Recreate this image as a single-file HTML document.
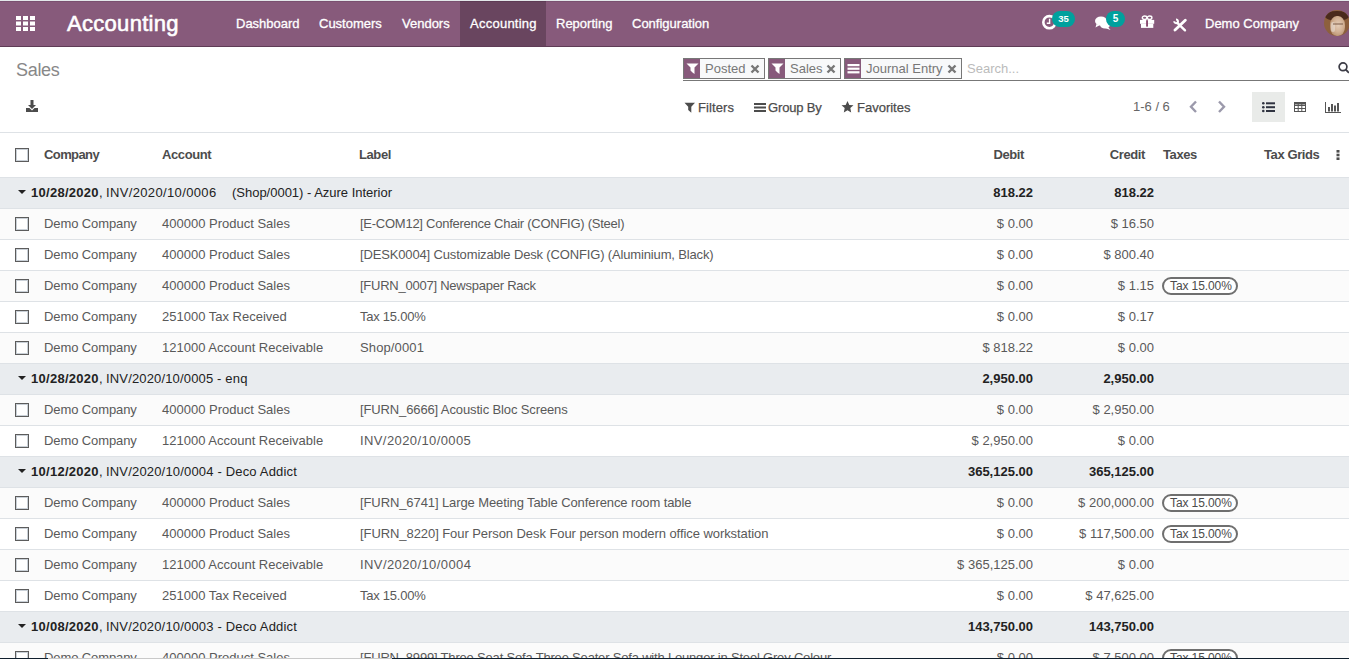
<!DOCTYPE html>
<html><head><meta charset="utf-8">
<style>
*{box-sizing:border-box;margin:0;padding:0}
html,body{width:1349px;height:659px;overflow:hidden;background:#fff;font-family:"Liberation Sans",sans-serif;color:#4c4c4c;position:relative}
.abs{position:absolute}
svg{display:block}
#topline{position:absolute;left:0;top:0;width:1349px;height:1px;background:#e3e8ea}
#nav{position:absolute;left:0;top:1px;width:1349px;height:46px;background:#875a7b;border-top:1px solid #7a5070;border-bottom:1px solid #5f3c56;color:#fff}
#nav .t{position:absolute;white-space:nowrap;font-size:13px;top:14px;-webkit-text-stroke:0.3px #fff}
#nav .active{position:absolute;left:460px;top:-1px;width:86px;height:45px;background:#69455f;border-top:1px solid #5e3b55}
.brand{position:absolute;left:67px;top:9px;font-size:22px;white-space:nowrap;letter-spacing:0.3px;-webkit-text-stroke:0.6px #fff}
.badge{position:absolute;background:#00a09d;color:#fff;border-radius:8px;font-size:9.5px;font-weight:bold;text-align:center;line-height:16px;height:16px}
#title{position:absolute;left:16px;top:60px;font-size:18px;color:#888;white-space:nowrap;letter-spacing:-0.3px}
.facet{position:absolute;top:58px;height:21px;border:1px solid #777;background:#f8f9fa;white-space:nowrap}
.facet .ic{position:absolute;left:0;top:0;width:16px;height:19px;background:#875a7b}
.facet .lb{position:absolute;left:21px;top:2px;font-size:13px;color:#777}
.tb{position:absolute;white-space:nowrap;font-size:13px;color:#4c4c4c}
.th{position:absolute;top:147px;font-size:13px;font-weight:bold;color:#4c4c4c;white-space:nowrap;letter-spacing:-0.4px}
.row{position:absolute;left:0;width:1349px;height:31px;border-top:1px solid #dee2e6}
.row.g{background:#e9ecef}
.row.o{background:#fbfbfb}
.row .c{position:absolute;top:7px;font-size:13px;white-space:nowrap;color:#595959}
.row .r{text-align:right}
.row.g .c{color:#222}
.cb{position:absolute;left:15px;width:14px;height:14px;border:1px solid #5c5c5c;background:#fff;box-shadow:inset 0 0 0 1px #c9d0d7}
.pill{position:absolute;left:1162px;top:6px;width:76px;height:18px;border:2px solid #6f6f6f;background:#fff;border-radius:9px;font-size:12px;white-space:nowrap;padding-left:6px;padding-top:0;line-height:15px;color:#4c4c4c;letter-spacing:-0.1px}
</style></head>
<body>
<div id="topline"></div>
<div id="nav">
  <svg class="abs" style="left:16px;top:14px" width="19" height="15" viewBox="0 0 19 15"><g fill="#fff">
    <rect x="0" y="0" width="5" height="4"/><rect x="7" y="0" width="5" height="4"/><rect x="14" y="0" width="5" height="4"/>
    <rect x="0" y="5.5" width="5" height="4"/><rect x="7" y="5.5" width="5" height="4"/><rect x="14" y="5.5" width="5" height="4"/>
    <rect x="0" y="11" width="5" height="4"/><rect x="7" y="11" width="5" height="4"/><rect x="14" y="11" width="5" height="4"/>
  </g></svg>
  <div class="brand">Accounting</div>
  <div class="active"></div>
  <div class="t" style="left:236px">Dashboard</div>
  <div class="t" style="left:319px">Customers</div>
  <div class="t" style="left:402px">Vendors</div>
  <div class="t" style="left:470px;letter-spacing:0.25px">Accounting</div>
  <div class="t" style="left:556px">Reporting</div>
  <div class="t" style="left:632px">Configuration</div>
  <div class="t" style="left:1205px">Demo Company</div>
  <!-- clock -->
  <svg class="abs" style="left:1040px;top:12px" width="18" height="18" viewBox="0 0 18 18">
    <circle cx="9.4" cy="8.2" r="6.1" fill="none" stroke="#fff" stroke-width="2.6"/>
    <path d="M9.6 4.8V9.2H6.8" fill="none" stroke="#fff" stroke-width="1.4"/>
  </svg>
  <div class="badge" style="left:1052px;top:9px;width:23px">35</div>
  <!-- comments -->
  <svg class="abs" style="left:1094px;top:12px" width="18" height="17" viewBox="0 0 18 17">
    <ellipse cx="7" cy="7" rx="6" ry="4.5" fill="#fff"/>
    <path d="M2.5 10 L1.5 13.5 L6 11Z" fill="#fff"/>
    <ellipse cx="11" cy="11" rx="5" ry="3.5" fill="#fff"/>
    <path d="M14 13 L16.5 16 L11 14Z" fill="#fff"/>
  </svg>
  <div class="badge" style="left:1106px;top:9px;width:19px;border-radius:8px;font-size:10px">5</div>
  <!-- gift -->
  <svg class="abs" style="left:1140px;top:13px" width="15" height="14" viewBox="0 0 15 14">
    <ellipse cx="4.6" cy="2.7" rx="2.3" ry="1.7" fill="none" stroke="#fff" stroke-width="1.4"/>
    <ellipse cx="9.6" cy="2.7" rx="2.3" ry="1.7" fill="none" stroke="#fff" stroke-width="1.4"/>
    <rect x="0" y="4.9" width="14.2" height="3.9" fill="#fff"/>
    <rect x="1" y="8.7" width="12.3" height="4.2" fill="#fff"/>
    <rect x="6.1" y="5.2" width="1.9" height="6.4" fill="#8a4a70"/>
  </svg>
  <!-- tools -->
  <svg class="abs" style="left:1173px;top:16px" width="14" height="14" viewBox="0 0 14 14">
    <path d="M4.3 4.8 L12 12.3" stroke="#fff" stroke-width="2.4" stroke-linecap="round"/>
    <path d="M1.2 3.3 A1.9 1.9 0 1 0 3 1.4" fill="none" stroke="#fff" stroke-width="2"/>
    <path d="M2 12 L12.3 2.2" stroke="#fff" stroke-width="2.8" stroke-linecap="round"/>
  </svg>
  <!-- avatar -->
  <div class="abs" style="left:1324px;top:8px;width:26px;height:26px;border-radius:50%;overflow:hidden;background:#8d603d">
    <div class="abs" style="left:1px;top:1px;width:24px;height:10px;border-radius:50%;background:#4a2a1c"></div>
    <div class="abs" style="left:6px;top:6px;width:15px;height:20px;border-radius:45%;background:radial-gradient(ellipse at 55% 45%,#e4cdb8 0,#d2b194 45%,#a67c58 100%)"></div>
    <div class="abs" style="left:7px;top:12px;width:4px;height:10px;border-radius:2px;background:#e8ddd5;opacity:.6"></div>
    <div class="abs" style="left:9px;top:13px;width:10px;height:2px;background:#7a5a46;opacity:.5"></div>
  </div>
</div>
<div id="title">Sales</div>
<svg class="abs" style="left:25px;top:100px" width="14" height="13" viewBox="0 0 14 13">
  <path d="M5.5 0H8.5V5H11L7 9L3 5H5.5Z" fill="#4c4c4c"/>
  <path d="M1 8H4.5L7 10.5L9.5 8H13V12H1Z" fill="#4c4c4c"/>
</svg>
<div class="facet" style="left:683px;width:82px"><div class="ic"><svg class="abs" style="left:2px;top:4px" width="13" height="12" viewBox="0 0 13 12"><path d="M0.5 0.5H12.5L8.5 4.5V11L6.5 9.5L4.5 7.5V4.5Z" fill="#fff"/></svg></div><div class="lb">Posted</div>
  <svg class="abs" style="left:66px;top:5px" width="10" height="10" viewBox="0 0 10 10"><path d="M1.5 1.5L8.5 8.5M8.5 1.5L1.5 8.5" stroke="#777" stroke-width="2.4"/></svg></div>
<div class="facet" style="left:768px;width:73px"><div class="ic"><svg class="abs" style="left:2px;top:4px" width="13" height="12" viewBox="0 0 13 12"><path d="M0.5 0.5H12.5L8.5 4.5V11L6.5 9.5L4.5 7.5V4.5Z" fill="#fff"/></svg></div><div class="lb">Sales</div>
  <svg class="abs" style="left:57px;top:5px" width="10" height="10" viewBox="0 0 10 10"><path d="M1.5 1.5L8.5 8.5M8.5 1.5L1.5 8.5" stroke="#777" stroke-width="2.4"/></svg></div>
<div class="facet" style="left:844px;width:118px"><div class="ic"><svg class="abs" style="left:2px;top:5px" width="13" height="10" viewBox="0 0 13 10"><rect x="0.5" y="0" width="12" height="2.2" fill="#fff"/><rect x="0.5" y="3.6" width="12" height="2.2" fill="#fff"/><rect x="0.5" y="7.2" width="12" height="2.2" fill="#fff"/></svg></div><div class="lb">Journal Entry</div>
  <svg class="abs" style="left:102px;top:5px" width="10" height="10" viewBox="0 0 10 10"><path d="M1.5 1.5L8.5 8.5M8.5 1.5L1.5 8.5" stroke="#777" stroke-width="2.4"/></svg></div>
<div class="abs" style="left:683px;top:80px;width:666px;height:1px;background:#777"></div>
<div class="tb" style="left:967px;top:61px;color:#bbb">Search...</div>
<svg class="abs" style="left:1338px;top:62px" width="11" height="12" viewBox="0 0 11 12"><circle cx="5" cy="4.8" r="3.9" fill="none" stroke="#3c3c46" stroke-width="1.7"/><path d="M7.8 7.6L11 10.8" stroke="#3c3c46" stroke-width="2"/></svg>
<!-- toolbar -->
<svg class="abs" style="left:684px;top:102px" width="12" height="11" viewBox="0 0 12 11"><path d="M0.5 0.8H11L7.3 4.8V10.8L4.2 8V4.8Z" fill="#4c4c4c"/></svg>
<div class="tb" style="left:698px;top:100px;-webkit-text-stroke:0.25px #4c4c4c;letter-spacing:0.1px">Filters</div>
<svg class="abs" style="left:754px;top:103px" width="12" height="10" viewBox="0 0 12 10"><rect x="0" y="0" width="12" height="2" fill="#4c4c4c"/><rect x="0" y="3.5" width="12" height="2" fill="#4c4c4c"/><rect x="0" y="7" width="12" height="2" fill="#4c4c4c"/></svg>
<div class="tb" style="left:768px;top:100px;-webkit-text-stroke:0.25px #4c4c4c;letter-spacing:-0.15px">Group By</div>
<svg class="abs" style="left:841px;top:101px" width="13" height="12" viewBox="0 0 13 12"><path d="M6.5 0L8.3 3.9L12.5 4.3L9.3 7.1L10.2 11.5L6.5 9.2L2.8 11.5L3.7 7.1L0.5 4.3L4.7 3.9Z" fill="#4c4c4c"/></svg>
<div class="tb" style="left:857px;top:100px;-webkit-text-stroke:0.25px #4c4c4c">Favorites</div>
<div class="tb" style="left:1133px;top:99px;color:#666">1-6 / 6</div>
<svg class="abs" style="left:1188px;top:100px" width="10" height="14" viewBox="0 0 10 14"><path d="M8 1.5L3 6.8L8 12" fill="none" stroke="#9b99ab" stroke-width="2.4"/></svg>
<svg class="abs" style="left:1217px;top:100px" width="10" height="14" viewBox="0 0 10 14"><path d="M2 1.5L7 6.8L2 12" fill="none" stroke="#9b99ab" stroke-width="2.4"/></svg>
<div class="abs" style="left:1252px;top:92px;width:33px;height:30px;background:#e9ebe9"></div>
<svg class="abs" style="left:1262px;top:102px" width="14" height="11" viewBox="0 0 14 11"><g fill="#2f3340"><circle cx="1.3" cy="1.3" r="1.3"/><circle cx="1.3" cy="5.2" r="1.3"/><circle cx="1.3" cy="9" r="1.3"/><rect x="4" y="0.3" width="9" height="2"/><rect x="4" y="4.2" width="9" height="2"/><rect x="4" y="8" width="9" height="2"/></g></svg>
<svg class="abs" style="left:1294px;top:102px" width="12" height="10" viewBox="0 0 12 10"><g fill="none" stroke="#555" stroke-width="1"><rect x="0.5" y="0.5" width="11" height="9"/><path d="M0.5 3.5H11.5M0.5 6.5H11.5M4.2 0.5V9.5M7.8 0.5V9.5"/></g><rect x="0" y="0" width="12" height="2.5" fill="#555"/></svg>
<svg class="abs" style="left:1325px;top:102px" width="16" height="11" viewBox="0 0 16 11"><g fill="#555"><rect x="0" y="0" width="1" height="11"/><rect x="0" y="10" width="16" height="1"/><rect x="3" y="5" width="2" height="4.5"/><rect x="6" y="2" width="2" height="7.5"/><rect x="9" y="3.5" width="2" height="6"/><rect x="12" y="1" width="2" height="8.5"/></g></svg>
<div class="abs" style="left:0;top:132px;width:1349px;height:1px;background:#dee2e6"></div>
<!-- header -->
<div class="cb" style="top:148px"></div>
<div class="th" style="left:44px;letter-spacing:-0.6px">Company</div>
<div class="th" style="left:162px">Account</div>
<div class="th" style="left:359px">Label</div>
<div class="th" style="right:325px">Debit</div>
<div class="th" style="right:204px">Credit</div>
<div class="th" style="left:1163px">Taxes</div>
<div class="th" style="left:1264px">Tax Grids</div>
<svg class="abs" style="left:1336px;top:150px" width="4" height="10" viewBox="0 0 4 10"><g fill="#4c4c4c"><rect x="0.5" y="0" width="3" height="2.6"/><rect x="0.5" y="3.7" width="3" height="2.6"/><rect x="0.5" y="7.4" width="3" height="2.6"/></g></svg>
<div id="rows"><div class="row g" style="top:177px"><svg class="abs" style="left:18px;top:12px" width="8" height="4"><path d="M0 0H8L4 4Z" fill="#222"/></svg><div id="gd0" class="c" style="left:31px;letter-spacing:0.280px"><b>10/28/2020</b></div><div class="c" style="left:99px">,</div><div id="gi0" class="c" style="left:106px;letter-spacing:0.354px">INV/2020/10/0006</div><div id="gs0" class="c" style="left:232px;letter-spacing:-0.016px">(Shop/0001) - Azure Interior</div><div class="c r" style="right:316px"><b>818.22</b></div><div class="c r" style="right:195px"><b>818.22</b></div></div>
<div class="row o" style="top:208px"><div class="cb" style="top:8px"></div><div class="c" style="left:44px;letter-spacing:-0.1px">Demo Company</div><div class="c" style="left:162px">400000 Product Sales</div><div id="lb1" class="c" style="left:360px;letter-spacing:-0.256px">[E-COM12] Conference Chair (CONFIG) (Steel)</div><div class="c r" style="right:316px">$ 0.00</div><div class="c r" style="right:195px">$ 16.50</div></div>
<div class="row " style="top:239px"><div class="cb" style="top:8px"></div><div class="c" style="left:44px;letter-spacing:-0.1px">Demo Company</div><div class="c" style="left:162px">400000 Product Sales</div><div id="lb2" class="c" style="left:360px;letter-spacing:-0.151px">[DESK0004] Customizable Desk (CONFIG) (Aluminium, Black)</div><div class="c r" style="right:316px">$ 0.00</div><div class="c r" style="right:195px">$ 800.40</div></div>
<div class="row o" style="top:270px"><div class="cb" style="top:8px"></div><div class="c" style="left:44px;letter-spacing:-0.1px">Demo Company</div><div class="c" style="left:162px">400000 Product Sales</div><div id="lb3" class="c" style="left:360px;letter-spacing:-0.240px">[FURN_0007] Newspaper Rack</div><div class="c r" style="right:316px">$ 0.00</div><div class="c r" style="right:195px">$ 1.15</div><div class="pill">Tax 15.00%</div></div>
<div class="row " style="top:301px"><div class="cb" style="top:8px"></div><div class="c" style="left:44px;letter-spacing:-0.1px">Demo Company</div><div class="c" style="left:162px">251000 Tax Received</div><div id="lb4" class="c" style="left:360px;letter-spacing:-0.244px">Tax 15.00%</div><div class="c r" style="right:316px">$ 0.00</div><div class="c r" style="right:195px">$ 0.17</div></div>
<div class="row o" style="top:332px"><div class="cb" style="top:8px"></div><div class="c" style="left:44px;letter-spacing:-0.1px">Demo Company</div><div class="c" style="left:162px">121000 Account Receivable</div><div id="lb5" class="c" style="left:360px;letter-spacing:0.125px">Shop/0001</div><div class="c r" style="right:316px">$ 818.22</div><div class="c r" style="right:195px">$ 0.00</div></div>
<div class="row g" style="top:363px"><svg class="abs" style="left:18px;top:12px" width="8" height="4"><path d="M0 0H8L4 4Z" fill="#222"/></svg><div id="gd6" class="c" style="left:31px;letter-spacing:0.280px"><b>10/28/2020</b></div><div class="c" style="left:99px">,</div><div id="gi6" class="c" style="left:106px;letter-spacing:0.158px">INV/2020/10/0005 - enq</div><div class="c r" style="right:316px"><b>2,950.00</b></div><div class="c r" style="right:195px"><b>2,950.00</b></div></div>
<div class="row o" style="top:394px"><div class="cb" style="top:8px"></div><div class="c" style="left:44px;letter-spacing:-0.1px">Demo Company</div><div class="c" style="left:162px">400000 Product Sales</div><div id="lb7" class="c" style="left:360px;letter-spacing:-0.125px">[FURN_6666] Acoustic Bloc Screens</div><div class="c r" style="right:316px">$ 0.00</div><div class="c r" style="right:195px">$ 2,950.00</div></div>
<div class="row " style="top:425px"><div class="cb" style="top:8px"></div><div class="c" style="left:44px;letter-spacing:-0.1px">Demo Company</div><div class="c" style="left:162px">121000 Account Receivable</div><div id="lb8" class="c" style="left:360px;letter-spacing:0.400px">INV/2020/10/0005</div><div class="c r" style="right:316px">$ 2,950.00</div><div class="c r" style="right:195px">$ 0.00</div></div>
<div class="row g" style="top:456px"><svg class="abs" style="left:18px;top:12px" width="8" height="4"><path d="M0 0H8L4 4Z" fill="#222"/></svg><div id="gd9" class="c" style="left:31px;letter-spacing:0.280px"><b>10/12/2020</b></div><div class="c" style="left:99px">,</div><div id="gi9" class="c" style="left:106px;letter-spacing:0.176px">INV/2020/10/0004 - Deco Addict</div><div class="c r" style="right:316px"><b>365,125.00</b></div><div class="c r" style="right:195px"><b>365,125.00</b></div></div>
<div class="row o" style="top:487px"><div class="cb" style="top:8px"></div><div class="c" style="left:44px;letter-spacing:-0.1px">Demo Company</div><div class="c" style="left:162px">400000 Product Sales</div><div id="lb10" class="c" style="left:360px;letter-spacing:-0.096px">[FURN_6741] Large Meeting Table Conference room table</div><div class="c r" style="right:316px">$ 0.00</div><div class="c r" style="right:195px">$ 200,000.00</div><div class="pill">Tax 15.00%</div></div>
<div class="row " style="top:518px"><div class="cb" style="top:8px"></div><div class="c" style="left:44px;letter-spacing:-0.1px">Demo Company</div><div class="c" style="left:162px">400000 Product Sales</div><div id="lb11" class="c" style="left:360px;letter-spacing:-0.071px">[FURN_8220] Four Person Desk Four person modern office workstation</div><div class="c r" style="right:316px">$ 0.00</div><div class="c r" style="right:195px">$ 117,500.00</div><div class="pill">Tax 15.00%</div></div>
<div class="row o" style="top:549px"><div class="cb" style="top:8px"></div><div class="c" style="left:44px;letter-spacing:-0.1px">Demo Company</div><div class="c" style="left:162px">121000 Account Receivable</div><div id="lb12" class="c" style="left:360px;letter-spacing:0.407px">INV/2020/10/0004</div><div class="c r" style="right:316px">$ 365,125.00</div><div class="c r" style="right:195px">$ 0.00</div></div>
<div class="row " style="top:580px"><div class="cb" style="top:8px"></div><div class="c" style="left:44px;letter-spacing:-0.1px">Demo Company</div><div class="c" style="left:162px">251000 Tax Received</div><div id="lb13" class="c" style="left:360px;letter-spacing:-0.244px">Tax 15.00%</div><div class="c r" style="right:316px">$ 0.00</div><div class="c r" style="right:195px">$ 47,625.00</div></div>
<div class="row g" style="top:611px"><svg class="abs" style="left:18px;top:12px" width="8" height="4"><path d="M0 0H8L4 4Z" fill="#222"/></svg><div id="gd14" class="c" style="left:31px;letter-spacing:0.280px"><b>10/08/2020</b></div><div class="c" style="left:99px">,</div><div id="gi14" class="c" style="left:106px;letter-spacing:0.176px">INV/2020/10/0003 - Deco Addict</div><div class="c r" style="right:316px"><b>143,750.00</b></div><div class="c r" style="right:195px"><b>143,750.00</b></div></div>
<div class="row o" style="top:642px"><div class="cb" style="top:8px"></div><div class="c" style="left:44px;letter-spacing:-0.1px">Demo Company</div><div class="c" style="left:162px">400000 Product Sales</div><div id="lb15" class="c" style="left:360px;letter-spacing:-0.187px">[FURN_8999] Three Seat Sofa Three Seater Sofa with Lounger in Steel Grey Colour</div><div class="c r" style="right:316px">$ 0.00</div><div class="c r" style="right:195px">$ 7,500.00</div><div class="pill">Tax 15.00%</div></div></div>
<div class="abs" style="left:0;top:658px;width:48px;height:1px;background:#0f1e2c"></div><div class="abs" style="left:48px;top:658px;width:344px;height:1px;background:#c9c9c9"></div>
<div class="abs" style="left:392px;top:658px;width:957px;height:1px;background:#0f1e2c"></div>
</body></html>
